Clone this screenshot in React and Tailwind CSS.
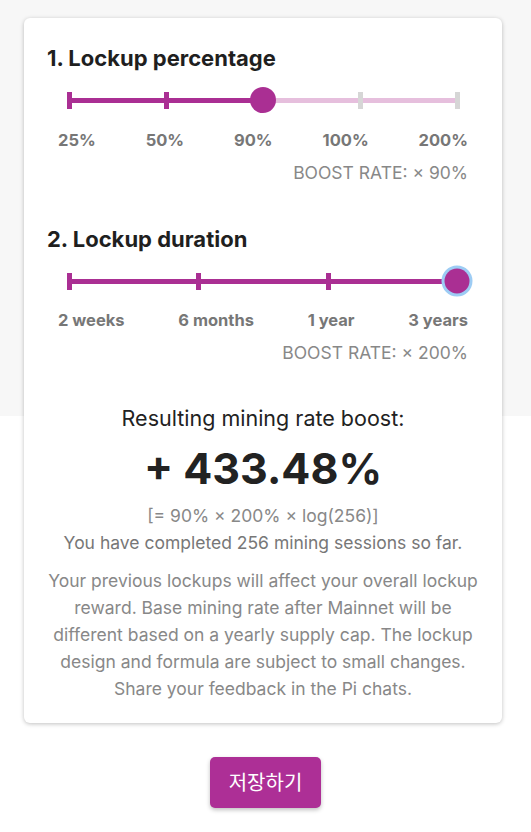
import React from "react";

const PURPLE = "#aa2f93";

function Slider({ stops, value }) {
  // stops: number of tick marks, value: index of the thumb
  const pct = (i) => (i / (stops - 1)) * 100;
  const last = value === stops - 1;
  return (
    <div className="relative h-[30px] mx-[22px]">
      {/* inactive track */}
      <div className="absolute left-0 right-0 top-[13px] h-[5px] bg-[#e6bfdd]" />
      {/* active track */}
      <div
        className="absolute left-0 top-[13px] h-[5px]"
        style={{ width: `${pct(value)}%`, background: PURPLE }}
      />
      {Array.from({ length: stops }).map((_, i) => (
        <div
          key={i}
          className={`absolute top-[7px] h-[17px] w-[5px] -ml-[2px] ${i <= value ? "bg-[#aa2f93]" : "bg-[#d6d6d6]"}`}
          style={{ left: `${pct(i)}%` }}
        />
      ))}
      <div
        className={`absolute top-[15px] -translate-x-1/2 -translate-y-1/2 rounded-full ${last ? "w-[31px] h-[31px] bg-[#9dccf4] p-[3px]" : "w-[26px] h-[26px]"}`}
        style={{ left: `${pct(value)}%` }}
      >
        <div className="w-full h-full rounded-full bg-[#aa2f93]" />
      </div>
    </div>
  );
}

export default function App() {
  return (
    <div
      className="min-h-[832px] bg-[linear-gradient(to_bottom,#f7f7f7_416px,#ffffff_416px)] pt-[18px]"
      style={{ fontFamily: "Inter, 'Noto Sans CJK KR', sans-serif" }}
    >
      <div className="mx-[24px] w-[478px] bg-white rounded-[6px] shadow-[0_1px_4px_rgba(0,0,0,0.25)] px-[23px] pt-[26px] pb-[21px]">
        {/* 1. Lockup percentage */}
        <h2 className="text-[22px] leading-[28px] font-bold text-[#1f1f1f]">1. Lockup percentage</h2>
        <div className="mt-[13px]">
          <Slider stops={5} value={2} />
        </div>
        <div className="mt-[15px] mx-[11px] flex justify-between text-[16.5px] leading-[20px] font-bold text-[#777]">
          <span>25%</span>
          <span>50%</span>
          <span>90%</span>
          <span>100%</span>
          <span>200%</span>
        </div>
        <p className="mt-[13px] mr-[11px] text-right text-[17.5px] leading-[20px] text-[#888]">BOOST RATE: × 90%</p>

        {/* 2. Lockup duration */}
        <h2 className="mt-[42px] text-[22px] leading-[28px] font-bold text-[#1f1f1f]">2. Lockup duration</h2>
        <div className="mt-[13px]">
          <Slider stops={4} value={3} />
        </div>
        <div className="mt-[14px] mx-[11px] flex justify-between text-[16.5px] leading-[20px] font-bold text-[#777]">
          <span>2 weeks</span>
          <span>6 months</span>
          <span>1 year</span>
          <span>3 years</span>
        </div>
        <p className="mt-[13px] mr-[11px] text-right text-[17.5px] leading-[20px] text-[#888]">BOOST RATE: × 200%</p>

        {/* result */}
        <div className="mt-[41px] text-center">
          <p className="text-[21.5px] leading-[28px] text-[#222]">Resulting mining rate boost:</p>
          <p className="mt-[10px] text-[43px] leading-[52px] font-bold text-[#222]">+ 433.48%</p>
          <p className="mt-[8px] text-[17.5px] leading-[27px] text-[#888]">[= 90% × 200% × log(256)]</p>
          <p className="text-[17.5px] leading-[27px] text-[#777]">You have completed 256 mining sessions so far.</p>
          <p className="mt-[11px] text-[17.5px] leading-[27px] text-[#888]">
            Your previous lockups will affect your overall lockup reward. Base mining rate after Mainnet will be
            different based on a yearly supply cap. The lockup design and formula are subject to small changes.
            Share your feedback in the Pi chats.
          </p>
        </div>
      </div>

      <div className="flex justify-center mt-[34px]">
        <button className="w-[111px] h-[51px] rounded-[5px] bg-[#ad2f96] text-white text-[20px] shadow-[0_2px_4px_rgba(0,0,0,0.25)]">
          저장하기
        </button>
      </div>
    </div>
  );
}
